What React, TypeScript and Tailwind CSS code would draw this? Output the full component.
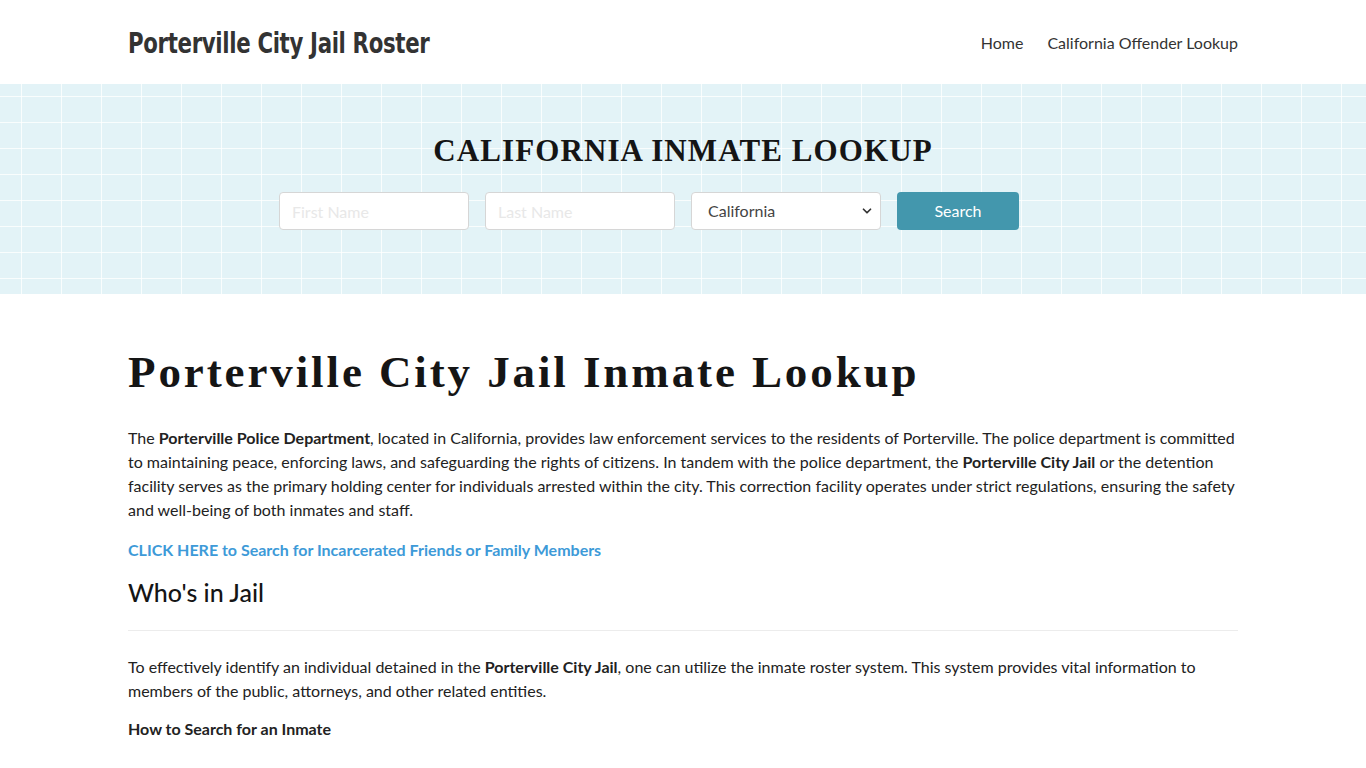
import { ChevronDown } from "lucide-react";

const lato = "font-['Lato','Liberation_Sans',sans-serif]";

export default function App() {
  return (
    <div className={`min-h-screen bg-white text-[#222] ${lato}`}>
      {/* header */}
      <header className="h-[84px]">
        <div className="mx-auto flex h-full w-[1110px] items-center justify-between">
          <a className="inline-block origin-left whitespace-nowrap pt-[3px] font-['DejaVu_Sans',sans-serif] text-[28px] font-bold tracking-[-0.4px] text-[#333] [font-stretch:condensed] [transform:scaleX(0.845)]">
            Porterville City Jail Roster
          </a>
          <nav className="flex items-center gap-6 pt-[2px] text-[16px] text-[#333]">
            <a>Home</a>
            <a>California Offender Lookup</a>
          </nav>
        </div>
      </header>

      {/* search band */}
      <section className="h-[210px] bg-[#e3f3f7] bg-[linear-gradient(to_right,rgba(255,255,255,0.8)_1px,transparent_1px),linear-gradient(to_bottom,rgba(255,255,255,0.8)_1px,transparent_1px)] [background-size:40px_26px] [background-position:21px_12px]">
        <div className="flex flex-col items-center pt-[51px]">
          <h2 className="font-['Liberation_Serif',serif] text-[31px] font-bold uppercase leading-none tracking-[1.1px] text-[#151515]">
            California Inmate Lookup
          </h2>
          <div className="mr-[68px] mt-[26px] flex gap-4">
            <input
              placeholder="First Name"
              className="h-[38px] w-[190px] rounded border border-[#d6d6d6] bg-white px-3 text-[16px] placeholder:text-[#e8e8e8] outline-none"
            />
            <input
              placeholder="Last Name"
              className="h-[38px] w-[190px] rounded border border-[#d6d6d6] bg-white px-3 text-[16px] placeholder:text-[#e8e8e8] outline-none"
            />
            <div className="relative flex h-[38px] w-[190px] items-center rounded border border-[#d6d6d6] bg-white pl-4 text-[16px] text-[#444]">
              California
              <ChevronDown className="absolute right-[6px] h-3.5 w-3.5 text-[#333]" strokeWidth={3} />
            </div>
            <button className="h-[38px] w-[122px] rounded bg-[#4397ad] text-[16px] text-white">
              Search
            </button>
          </div>
        </div>
      </section>

      {/* content */}
      <main className="mx-auto w-[1110px] pt-[50px]">
        <h1 className="font-['Liberation_Serif',serif] text-[45px] font-bold leading-[56px] tracking-[2.9px] text-[#151515]">
          Porterville City Jail Inmate Lookup
        </h1>
        <p className="mt-[26px] text-[16px] leading-[24px]">
          The <b>Porterville Police Department</b>, located in California, provides law enforcement services to the residents of Porterville. The police department is committed to maintaining peace, enforcing laws, and safeguarding the rights of citizens. In tandem with the police department, the <b>Porterville City Jail</b> or the detention facility serves as the primary holding center for individuals arrested within the city. This correction facility operates under strict regulations, ensuring the safety and well-being of both inmates and staff.
        </p>
        <p className="mt-[16px] text-[16px] font-bold leading-[24px] text-[#3d9ad8]">
          CLICK HERE to Search for Incarcerated Friends or Family Members
        </p>
        <h3 className="mt-[12px] text-[25px] font-medium leading-[36px] text-[#151515]">Who's in Jail</h3>
        <hr className="mt-[20px] border-t border-[#ececec]" />
        <p className="mt-[24px] text-[16px] leading-[24px]">
          To effectively identify an individual detained in the <b>Porterville City Jail</b>, one can utilize the inmate roster system. This system provides vital information to members of the public, attorneys, and other related entities.
        </p>
        <p className="mt-[14px] text-[16px] font-bold leading-[24px]">How to Search for an Inmate</p>
      </main>
    </div>
  );
}
